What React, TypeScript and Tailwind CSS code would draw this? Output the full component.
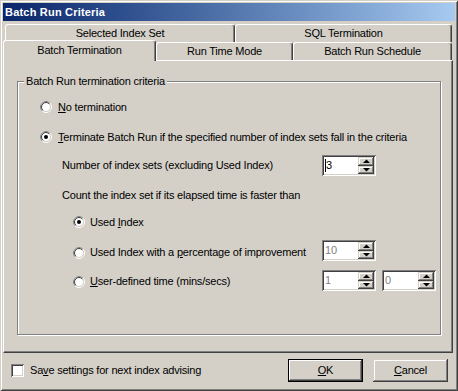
import React from "react";

const raised =
  "shadow-[inset_-1px_-1px_#404040,inset_1px_1px_#d4d0c8,inset_-2px_-2px_#808080,inset_2px_2px_#ffffff]";
const sunken =
  "shadow-[inset_1px_1px_#808080,inset_-1px_-1px_#ffffff,inset_2px_2px_#404040,inset_-2px_-2px_#d4d0c8]";

function Radio({ checked }: { checked?: boolean }) {
  return (
    <svg width="12" height="12" viewBox="0 0 12 12" className="shrink-0">
      <circle cx="6" cy="6" r="5.5" fill="none" stroke="#ffffff" />
      <path d="M 2.1 9.9 A 5.5 5.5 0 0 1 9.9 2.1" fill="none" stroke="#808080" />
      <circle cx="6" cy="6" r="4.5" fill="#ffffff" stroke="#d4d0c8" />
      <path d="M 2.8 9.2 A 4.5 4.5 0 0 1 9.2 2.8" fill="none" stroke="#404040" />
      {checked && <circle cx="6" cy="6" r="2" fill="#000000" />}
    </svg>
  );
}

function Arrow({ up }: { up?: boolean }) {
  return (
    <svg width="7" height="4" viewBox="0 0 7 4">
      {up ? <path d="M0 4 L7 4 L3.5 0.5 Z" fill="#000" /> : <path d="M0 0 L7 0 L3.5 3.5 Z" fill="#000" />}
    </svg>
  );
}

function Spinner({ value, disabled, caret }: { value: string; disabled?: boolean; caret?: boolean }) {
  return (
    <div className={`w-[54px] h-[21px] p-[2px] flex bg-white shrink-0 ${sunken}`}>
      <div className={`flex-1 flex items-center pl-[1px] ${disabled ? "text-[#808080]" : "text-black"}`}>
        {caret && <span className="inline-block w-[1px] h-[13px] bg-black" />}
        <span>{value}</span>
      </div>
      <div className="w-[16px] flex flex-col">
        <div className={`flex-1 flex items-center justify-center bg-[#d4d0c8] ${raised}`}>
          <Arrow up />
        </div>
        <div className={`flex-1 flex items-center justify-center bg-[#d4d0c8] ${raised}`}>
          <Arrow />
        </div>
      </div>
    </div>
  );
}

function Tab({ w, children, selected }: { w: string; children: React.ReactNode; selected?: boolean }) {
  return (
    <div
      className={`${w} ${
        selected ? "h-[21px] -mt-[2px] relative z-10 pb-[2px]" : "h-[18px]"
      } flex items-center justify-center bg-[#d4d0c8] border-t border-l border-r border-white border-r-[#404040] rounded-t-[3px] shadow-[inset_-1px_0_#808080]`}
    >
      {children}
    </div>
  );
}

export default function App() {
  return (
    <div className="w-[458px] h-[391px] bg-[#d4d0c8] p-[3px] flex flex-col font-['Liberation_Sans',Arial,sans-serif] text-[11px] leading-[13px] text-black tracking-[-0.2px] shadow-[inset_1px_1px_#d4d0c8,inset_-1px_-1px_#404040,inset_2px_2px_#ffffff,inset_-2px_-2px_#808080]">
      <div className="h-[18px] flex items-center pl-[2px] bg-linear-to-r from-[#0a246a] to-[#a6caf0] text-white font-bold tracking-[0.2px]">
        Batch Run Criteria
      </div>

      <div className="mt-[3px] h-[18px] flex pl-[2px]">
        <Tab w="w-[230px]">Selected Index Set</Tab>
        <Tab w="w-[217px]">SQL Termination</Tab>
      </div>
      <div className="h-[18px] flex items-start">
        <Tab w="w-[153px]" selected>
          Batch Termination
        </Tab>
        <Tab w="w-[137px]">Run Time Mode</Tab>
        <Tab w="w-[159px]">Batch Run Schedule</Tab>
      </div>

      <div className="w-[450px] h-[293px] flex flex-col border-t border-l border-r border-b border-white border-r-[#404040] border-b-[#404040] shadow-[inset_-1px_-1px_#808080]">
        <div className="ml-[13px] mt-[20px] w-[424px] h-[254px] relative flex flex-col border border-[#808080] shadow-[inset_1px_1px_#ffffff,1px_1px_#ffffff]">
          <div className="absolute -top-[7px] left-[6px] px-[2px] bg-[#d4d0c8]">Batch Run termination criteria</div>

          <div className="mt-[15px] h-[20px] flex items-center pl-[22px]">
            <Radio />
            <span className="ml-[6px]">
              <span className="underline underline-offset-[1px]">N</span>o termination
            </span>
          </div>

          <div className="mt-[10px] h-[20px] flex items-center pl-[22px]">
            <Radio checked />
            <span className="ml-[6px]">
              <span className="underline underline-offset-[1px]">T</span>erminate Batch Run if the specified number of index
              sets fall in the criteria
            </span>
          </div>

          <div className="mt-[8px] h-[21px] flex items-center pl-[44px]">
            <span className="w-[260px]">Number of index sets (excluding Used Index)</span>
            <Spinner value="3" caret />
          </div>

          <div className="mt-[9px] h-[20px] flex items-center pl-[44px]">
            <span>Count the index set if its elapsed time is faster than</span>
          </div>

          <div className="mt-[7px] h-[20px] flex items-center pl-[55px]">
            <Radio checked />
            <span className="ml-[5px]">
              Used <span className="underline underline-offset-[1px]">I</span>ndex
            </span>
          </div>

          <div className="mt-[8px] h-[21px] flex items-center pl-[55px]">
            <div className="w-[249px] flex items-center translate-y-[2px]">
              <Radio />
              <span className="ml-[5px]">
                Used Index with a <span className="underline underline-offset-[1px]">p</span>ercentage of improvement
              </span>
            </div>
            <Spinner value="10" disabled />
          </div>

          <div className="mt-[9px] h-[21px] flex items-center pl-[55px]">
            <div className="w-[249px] flex items-center translate-y-[1px]">
              <Radio />
              <span className="ml-[5px]">
                <span className="underline underline-offset-[1px]">U</span>ser-defined time (mins/secs)
              </span>
            </div>
            <Spinner value="1" disabled />
            <div className="ml-[6px]">
              <Spinner value="0" disabled />
            </div>
          </div>
        </div>
      </div>

      <div className="h-[35px] pt-[6px] pl-[8px] pr-[7px]">
        <div className="h-[23px] flex items-center">
          <div className={`w-[13px] h-[13px] bg-white shrink-0 ${sunken}`} />
          <span className="ml-[6px]">
            Sa<span className="underline underline-offset-[1px]">v</span>e settings for next index advising
          </span>
          <div className="ml-auto flex gap-[10px]">
            <div className="w-[75px] h-[23px] border border-black bg-[#d4d0c8] flex items-center justify-center shadow-[inset_-1px_-1px_#404040,inset_1px_1px_#ffffff,inset_-2px_-2px_#808080]">
              <span>
                <span className="underline underline-offset-[1px]">O</span>K
              </span>
            </div>
            <div className={`w-[75px] h-[23px] bg-[#d4d0c8] flex items-center justify-center ${raised}`}>
              <span>
                <span className="underline underline-offset-[1px]">C</span>ancel
              </span>
            </div>
          </div>
        </div>
      </div>
    </div>
  );
}
